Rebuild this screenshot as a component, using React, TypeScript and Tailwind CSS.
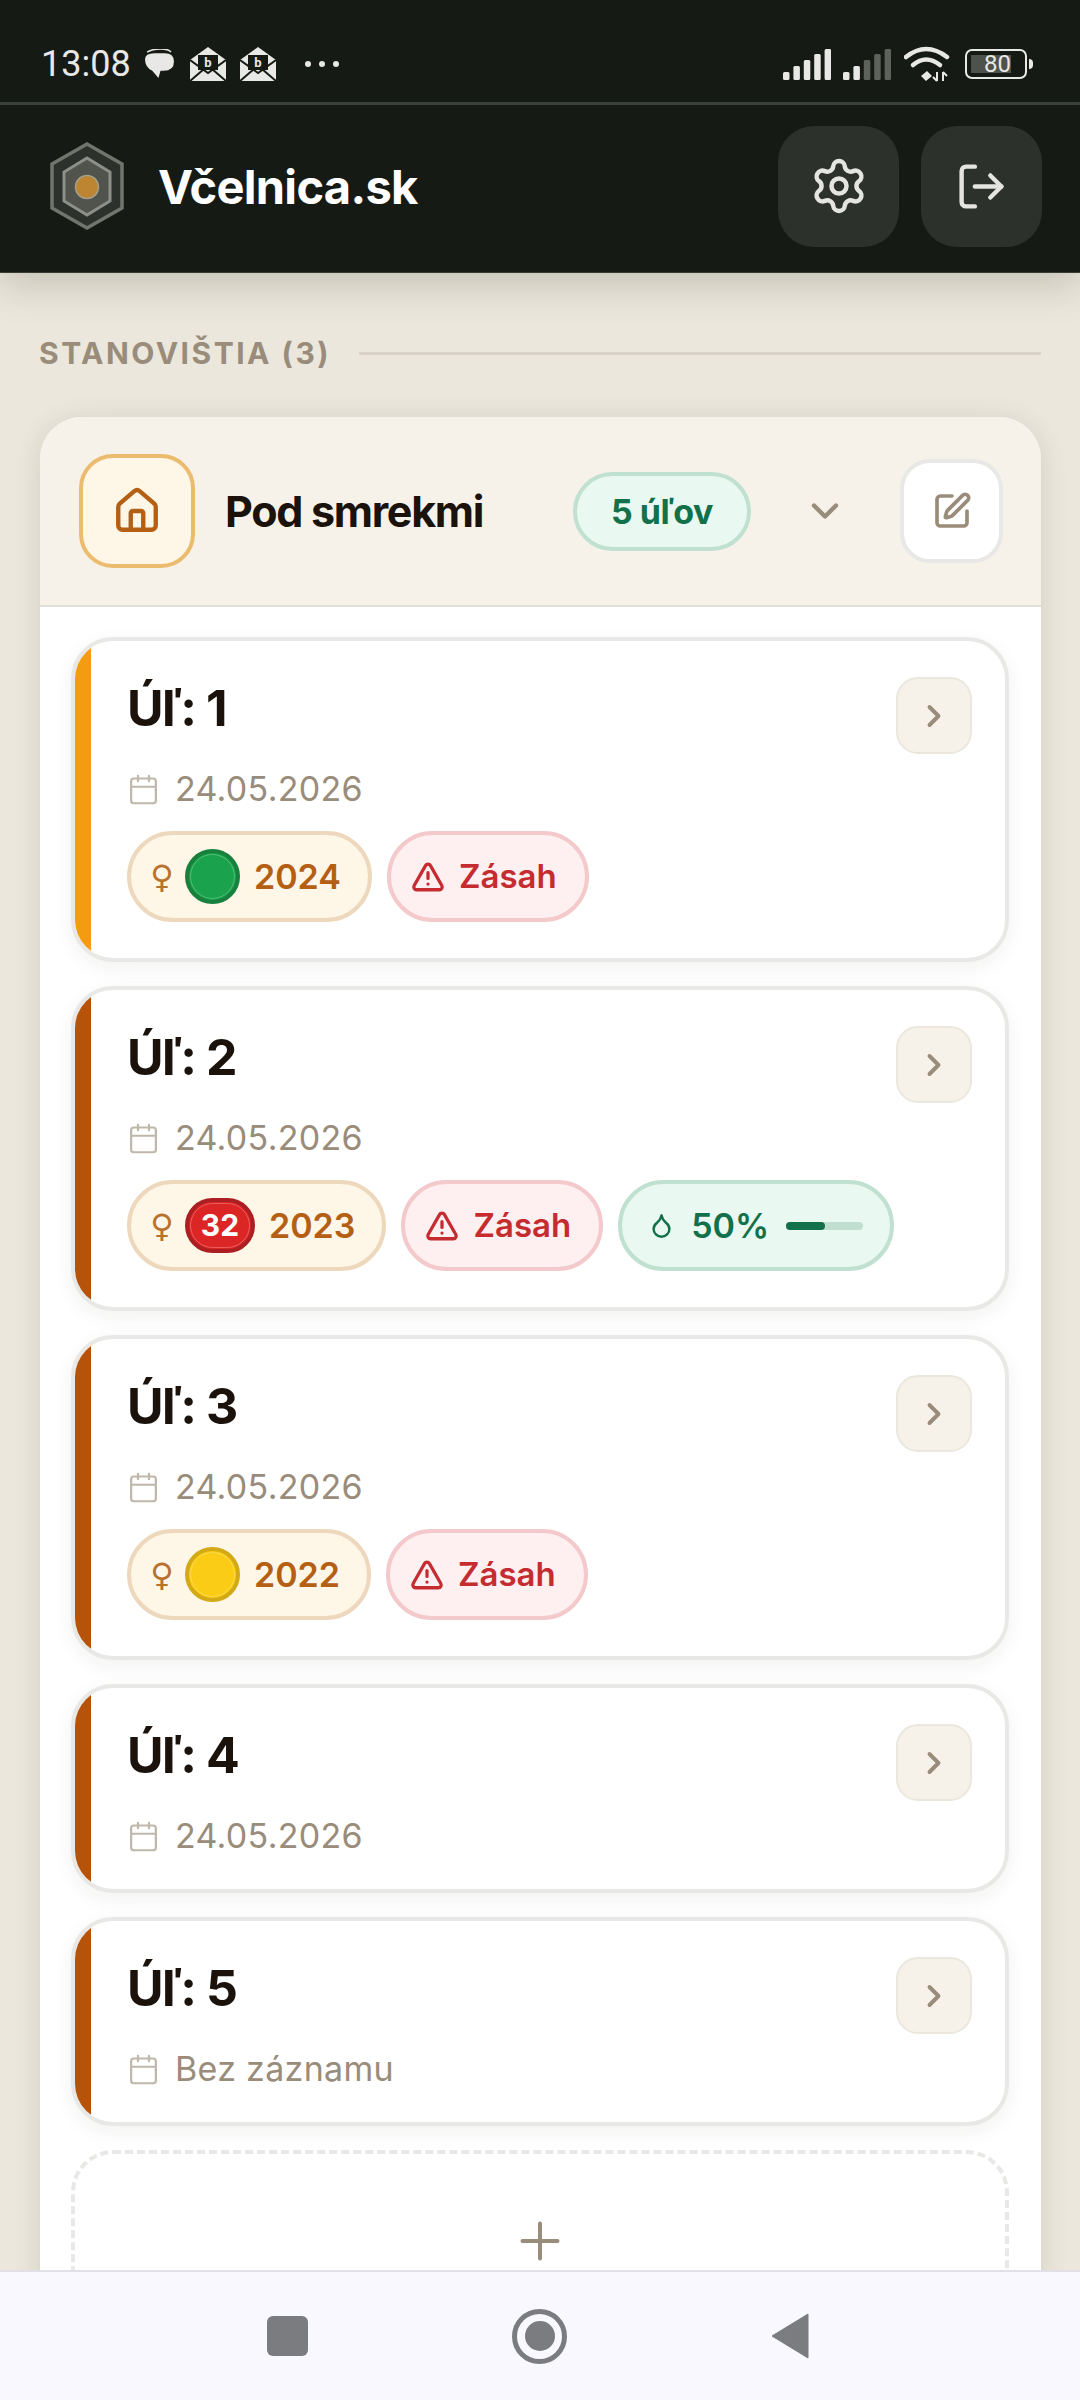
import { ChevronDown, ChevronRight, Calendar, Droplet, House, LogOut, Plus, Settings, SquarePen, TriangleAlert } from 'lucide-react';

const font = { fontFamily: 'Inter, "Noto Sans", sans-serif' };

function Bars({ dim }: { dim?: boolean }) {
  const heights = [8, 14, 20, 26, 31];
  return (
    <svg width="48" height="31" viewBox="0 0 48 31">
      {heights.map((h, i) => (
        <rect key={i} x={i * 10.4} y={31 - h} width="6.5" height={h} rx="1.5" fill={dim && i > 1 ? '#5d625b' : '#e8e8e6'} />
      ))}
    </svg>
  );
}

function Mail() {
  return (
    <svg width="36" height="36" viewBox="0 0 36 36">
      <path d="M0 14 L18 1 L36 14 V35 H0 Z" fill="#e8e8e6" />
      <rect x="8" y="9" width="20" height="15" fill="#161a14" />
      <path d="M0 14 L18 27 L36 14" fill="none" stroke="#161a14" strokeWidth="2" />
      <path d="M0 35 L14 23 M36 35 L22 23" stroke="#161a14" strokeWidth="2" />
      <text x="18" y="21" textAnchor="middle" fontSize="13" fontWeight="700" fill="#e8e8e6" fontFamily="Roboto">b</text>
    </svg>
  );
}

function StatusBar() {
  return (
    <div className="flex h-[102px] items-center justify-between pl-[41px] pr-[47px] pt-[26px] text-[#e8e8e6]">
      <div className="flex items-center">
        <span className="text-[36px] leading-none" style={{ fontFamily: 'Roboto, sans-serif' }}>13:08</span>
        <svg className="ml-[13px]" width="31" height="31" viewBox="0 0 30 30">
          <path d="M3 3 Q8 0 16 0 Q24 0 26 3" fill="none" stroke="#e8e8e6" strokeWidth="1.5" />
          <path d="M1 10 Q1 4 10 4 H20 Q29 4 29 12 Q29 21 19 21 H16 L14 28 L8 21 Q1 18 1 10 Z" fill="#e8e8e6" />
        </svg>
        <div className="ml-[15px]"><Mail /></div>
        <div className="ml-[14px]"><Mail /></div>
        <div className="ml-[29px] flex gap-[8px]">
          <span className="size-[6px] rounded-full bg-[#e8e8e6]" />
          <span className="size-[6px] rounded-full bg-[#e8e8e6]" />
          <span className="size-[6px] rounded-full bg-[#e8e8e6]" />
        </div>
      </div>
      <div className="flex items-center">
        <Bars />
        <div className="ml-[12px]"><Bars dim /></div>
        <svg className="ml-[13px]" width="46" height="36" viewBox="0 0 46 36">
          <path d="M2 11 Q22 -5 43 11" fill="none" stroke="#e8e8e6" strokeWidth="4.5" strokeLinecap="round" />
          <path d="M9 19 Q22 8 36 19" fill="none" stroke="#e8e8e6" strokeWidth="4.5" strokeLinecap="round" />
          <path d="M17 30 L23 25 L28 30 L22 35 Z" fill="#e8e8e6" />
          <path d="M33 26 V35 M29 31 L33 35 M39 35 V26 M39 26 L43 30" stroke="#e8e8e6" strokeWidth="2" fill="none" />
        </svg>
        <div className="ml-[15px] flex items-center">
          <div className="flex h-[30px] w-[62px] items-center rounded-[7px] border-[2.5px] border-[#e8e8e6] px-[4px]">
            <div className="flex h-[18px] w-[40px] items-center justify-end bg-[#4d524c] text-[24px] leading-none" style={{ fontFamily: 'Roboto, sans-serif' }}>80</div>
          </div>
          <div className="ml-[2px] h-[10px] w-[4px] rounded-r-sm bg-[#e8e8e6]" />
        </div>
      </div>
    </div>
  );
}

function Logo() {
  return (
    <svg width="74" height="88" viewBox="0 0 74 88">
      <polygon points="37,2 72,22 72,66 37,86 2,66 2,22" fill="#2d312b" stroke="#71756e" strokeWidth="3.5" />
      <polygon points="37,16 60,30 60,59 37,73 14,59 14,30" fill="#50544d" stroke="#8d908a" strokeWidth="3" />
      <circle cx="37" cy="45" r="11.5" fill="#bd8432" stroke="#a69f8b" strokeWidth="1.5" />
    </svg>
  );
}

function Header() {
  return (
    <header className="z-10 shrink-0 bg-[#161a14] shadow-[0_8px_40px_rgba(30,30,20,0.22)]">
      <StatusBar />
      <div className="h-[3px] bg-[#3a403a]" />
      <div className="flex h-[168px] items-center justify-between border-b border-[#3a3d36] pb-[5px] pl-[50px] pr-[38px]">
        <div className="flex items-center gap-[34px]">
          <Logo />
          <span className="text-[47px] font-bold leading-none tracking-[-0.7px] text-white" style={font}>Včelnica.sk</span>
        </div>
        <div className="flex gap-[22px]">
          <button className="flex h-[121px] w-[121px] items-center justify-center rounded-[36px] bg-[#2d312b] text-[#e4e4e0]">
            <Settings size={60} strokeWidth={1.8} />
          </button>
          <button className="flex h-[121px] w-[121px] items-center justify-center rounded-[36px] bg-[#2d312b] text-[#e4e4e0]">
            <LogOut size={53} strokeWidth={2} />
          </button>
        </div>
      </div>
    </header>
  );
}

function Queen({ children, year }: { children: React.ReactNode; year: string }) {
  return (
    <div className="flex h-[91px] items-center rounded-full border-[4px] border-[#eed8bd] bg-[#fef6e7] pl-[18px] pr-[27px]">
      <span className="w-[26px] text-center text-[32px] leading-none text-[#b8722c]" style={{ fontFamily: '"DejaVu Sans", sans-serif' }}>♀</span>
      <div className="ml-[10px]">{children}</div>
      <span className="ml-[14px] text-[34px] font-semibold text-[#b45f14]" style={font}>{year}</span>
    </div>
  );
}

function Dot({ fill, ring, inner }: { fill: string; ring: string; inner: string }) {
  return (
    <div className="flex size-[55px] items-center justify-center rounded-full border-[4px]" style={{ backgroundColor: fill, borderColor: ring }}>
      <div className="size-[45px] rounded-full border-[1.5px]" style={{ borderColor: inner }} />
    </div>
  );
}

function MarkBadge() {
  return (
    <div className="flex h-[55px] w-[70px] items-center justify-center rounded-full border-[4px] border-[#ab1f22] bg-[#dc2626]">
      <div className="flex h-[45px] w-[60px] items-center justify-center rounded-full border-[1.5px] border-[#ec5c5c] text-[30px] font-bold text-white" style={font}>32</div>
    </div>
  );
}

function Alarm() {
  return (
    <div className="flex h-[91px] items-center gap-[14px] rounded-full border-[4px] border-[#f4c9cb] bg-[#feeff0] pl-[20px] pr-[28px] text-[#c52c30]">
      <TriangleAlert size={34} strokeWidth={2.3} />
      <span className="text-[33px] font-semibold" style={font}>Zásah</span>
    </div>
  );
}

function Feed() {
  return (
    <div className="flex h-[91px] items-center rounded-full border-[4px] border-[#c0e0d0] bg-[#e9f8f0] pl-[26px] pr-[27px] text-[#12704a]">
      <Droplet size={27} strokeWidth={2.2} />
      <span className="ml-[16px] text-[34px] font-semibold" style={font}>50%</span>
      <div className="ml-[17px] h-[8px] w-[77px] rounded-full bg-[#c0dfd0]">
        <div className="h-full rounded-full bg-[#12704a]" style={{ width: '50%' }} />
      </div>
    </div>
  );
}

type Hive = { name: string; date: string; accent: string; tags?: React.ReactNode };

const hives: Hive[] = [
  {
    name: 'Úľ: 1',
    date: '24.05.2026',
    accent: '#f39c12',
    tags: (
      <>
        <Queen year="2024"><Dot fill="#1aa34c" ring="#16803c" inner="#4fbd76" /></Queen>
        <Alarm />
      </>
    ),
  },
  {
    name: 'Úľ: 2',
    date: '24.05.2026',
    accent: '#b45309',
    tags: (
      <>
        <Queen year="2023"><MarkBadge /></Queen>
        <Alarm />
        <Feed />
      </>
    ),
  },
  {
    name: 'Úľ: 3',
    date: '24.05.2026',
    accent: '#b45309',
    tags: (
      <>
        <Queen year="2022"><Dot fill="#facc15" ring="#d4a916" inner="#fbd94f" /></Queen>
        <Alarm />
      </>
    ),
  },
  { name: 'Úľ: 4', date: '24.05.2026', accent: '#b45309' },
  { name: 'Úľ: 5', date: 'Bez záznamu', accent: '#b45309' },
];

function HiveCard({ hive }: { hive: Hive }) {
  return (
    <div className="flex overflow-hidden rounded-[42px] border-[4px] border-[#e8e8e6] bg-white shadow-[0_6px_20px_rgba(40,30,10,0.06)]">
      <div className="w-[16px] shrink-0" style={{ backgroundColor: hive.accent }} />
      <div className="min-w-0 flex-1 pb-[31px] pl-[36px] pr-[33px] pt-[36px]">
        <div className="flex items-start justify-between">
          <h3 className="pt-[1px] text-[50px] font-bold leading-[60px] tracking-[-1.5px] text-[#1a120b]" style={font}>{hive.name}</h3>
          <button className="flex h-[77px] w-[76px] items-center justify-center rounded-[22px] border-2 border-[#ebe7dc] bg-[#f6f2ea] text-[#9a8c7a]">
            <ChevronRight size={36} strokeWidth={2.6} />
          </button>
        </div>
        <div className="mt-[13px] flex items-center gap-[15px] text-[#9a8c7a]">
          <Calendar size={33} strokeWidth={1.6} className="text-[#c0b7ab]" />
          <span className="text-[34px] leading-[44px] tracking-[0.3px]" style={font}>{hive.date}</span>
        </div>
        {hive.tags && <div className="mt-[20px] flex gap-[15px] pb-[5px]">{hive.tags}</div>}
      </div>
    </div>
  );
}

export default function App() {
  return (
    <div className="flex h-[2400px] w-[1080px] flex-col overflow-hidden bg-[#ebe7dc]" style={font}>
      <Header />
      <main className="min-h-0 flex-1 overflow-hidden pl-[40px] pr-[39px]">
        <div className="mt-[56px] flex h-[48px] items-center gap-[28px]">
          <span className="-ml-[1px] text-[30px] font-bold tracking-[2.5px] text-[#9a8c7a]">STANOVIŠTIA (3)</span>
          <div className="h-[3px] flex-1 bg-[#d8d3c6]" />
        </div>
        <section className="mt-[40px] overflow-hidden rounded-t-[42px] bg-white shadow-[0_4px_28px_rgba(40,30,10,0.12)]">
          <div className="flex h-[190px] items-center border-b-2 border-[#e3dfd4] bg-[#f6f2ea] pl-[39px] pr-[38px]">
            <div className="flex h-[114px] w-[116px] items-center justify-center rounded-[34px] border-[4px] border-[#ecbc6e] bg-[#fef6e7] text-[#b45f14]">
              <House size={50} strokeWidth={2.1} />
            </div>
            <h2 className="ml-[30px] flex-1 text-[43px] font-bold tracking-[-1.3px] text-[#1a120b]">Pod smrekmi</h2>
            <div className="flex h-[79px] w-[178px] items-center justify-center rounded-full border-[4px] border-[#c0e0d0] bg-[#e9f8f0] text-[34px] font-bold tracking-[-0.5px] text-[#12704a]">5 úľov</div>
            <ChevronDown size={44} strokeWidth={2.4} className="ml-[52px] text-[#9a8c7a]" />
            <button className="ml-[53px] flex h-[104px] w-[103px] items-center justify-center rounded-[30px] border-[4px] border-[#e8e8e6] bg-white text-[#9a8c7a]">
              <SquarePen size={40} strokeWidth={2.2} />
            </button>
          </div>
          <div className="flex flex-col gap-[24px] pl-[31px] pr-[32px] pt-[30px]">
            {hives.map((hive) => (
              <HiveCard key={hive.name} hive={hive} />
            ))}
            <button className="flex h-[240px] items-start justify-center rounded-[42px] border-[4px] border-dashed border-[#e8e8e6] pt-[57px] text-[#9a8c7a]">
              <Plus size={60} strokeWidth={1.6} />
            </button>
          </div>
        </section>
      </main>
      <nav className="z-10 flex h-[130px] shrink-0 items-center justify-center border-t-2 border-[#e0e0e6] bg-[#f8f8fe] pr-[4px]">
        <div className="flex w-[542px] items-center justify-between">
          <div className="h-[40px] w-[41px] rounded-[6px] bg-[#7b7c80]" />
          <div className="flex size-[55px] items-center justify-center rounded-full border-[5px] border-[#7b7c80]">
            <div className="size-[30px] rounded-full bg-[#7b7c80]" />
          </div>
          <svg width="38" height="46" viewBox="0 0 38 46">
            <path d="M37 1 V45 L1 23 Z" fill="#7b7c80" stroke="#7b7c80" strokeLinejoin="round" />
          </svg>
        </div>
      </nav>
    </div>
  );
}
